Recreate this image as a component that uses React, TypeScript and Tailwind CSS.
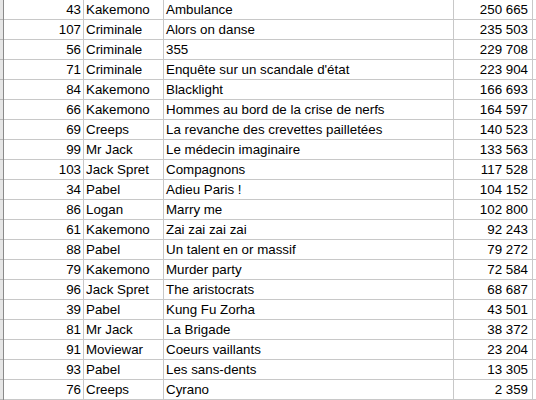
import React from "react";

const rows: [number, string, string, string][] = [
  [43, "Kakemono", "Ambulance", "250 665"],
  [107, "Criminale", "Alors on danse", "235 503"],
  [56, "Criminale", "355", "229 708"],
  [71, "Criminale", "Enquête sur un scandale d'état", "223 904"],
  [84, "Kakemono", "Blacklight", "166 693"],
  [66, "Kakemono", "Hommes au bord de la crise de nerfs", "164 597"],
  [69, "Creeps", "La revanche des crevettes pailletées", "140 523"],
  [99, "Mr Jack", "Le médecin imaginaire", "133 563"],
  [103, "Jack Spret", "Compagnons", "117 528"],
  [34, "Pabel", "Adieu Paris !", "104 152"],
  [86, "Logan", "Marry me", "102 800"],
  [61, "Kakemono", "Zai zai zai zai", "92 243"],
  [88, "Pabel", "Un talent en or massif", "79 272"],
  [79, "Kakemono", "Murder party", "72 584"],
  [96, "Jack Spret", "The aristocrats", "68 687"],
  [39, "Pabel", "Kung Fu Zorha", "43 501"],
  [81, "Mr Jack", "La Brigade", "38 372"],
  [91, "Moviewar", "Coeurs vaillants", "23 204"],
  [93, "Pabel", "Les sans-dents", "13 305"],
  [76, "Creeps", "Cyrano", "2 359"],
];

export default function App() {
  return (
    <div className="w-[536px] h-[400px] overflow-hidden bg-white font-['Liberation_Sans',Arial,sans-serif] text-[13.33px] text-black">
      {rows.map(([id, studio, title, entries]) => (
        <div key={title} className="flex h-[20px] leading-[19px]">
          <div className="w-[3px] shrink-0 bg-[#e6e6e6] border-b border-[#b8b8b8]" />
          <div className="w-[1px] shrink-0 bg-[#8a8a8a]" />
          <div className="w-[80px] shrink-0 border-r border-b border-[#c8c8c8] pr-[2px] text-right">
            {id}
          </div>
          <div className="w-[80px] shrink-0 border-r border-b border-[#c8c8c8] pl-[2px] whitespace-nowrap overflow-hidden">
            {studio}
          </div>
          <div className="w-[290px] shrink-0 border-r border-b border-[#c8c8c8] pl-[2px] whitespace-nowrap overflow-hidden">
            {title}
          </div>
          <div className="w-[79px] shrink-0 border-r border-b border-[#c8c8c8] pr-[4px] text-right">
            {entries}
          </div>
          <div className="flex-1 border-b border-[#c8c8c8]" />
        </div>
      ))}
    </div>
  );
}
